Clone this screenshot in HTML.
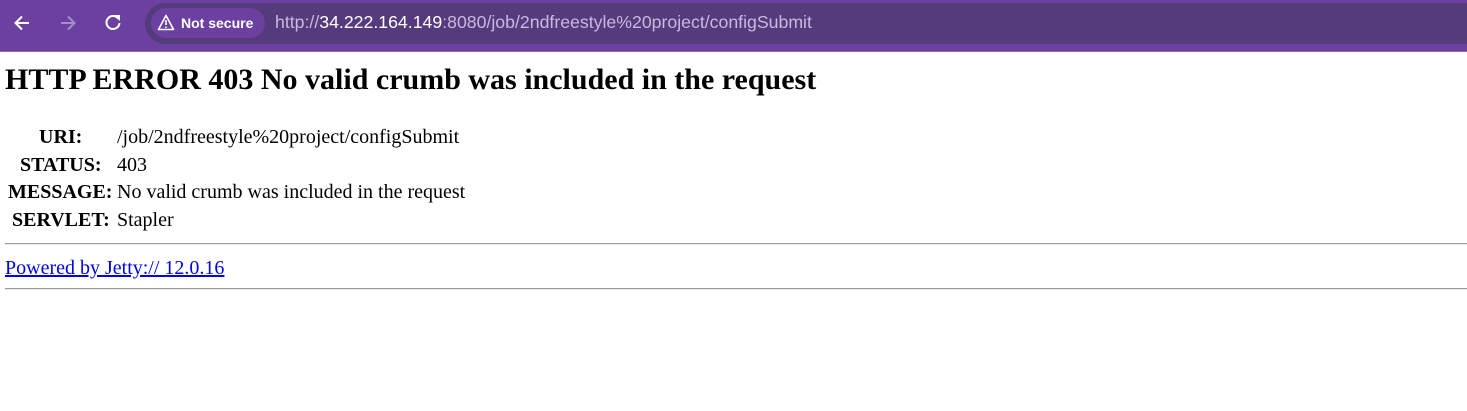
<!DOCTYPE html>
<html><head><style>
html,body{margin:0;padding:0;width:1467px;height:411px;background:#fff;overflow:hidden;position:relative}
.bar{position:absolute;left:0;top:0;width:1467px;height:52px;background:#6c40a1;border-bottom:1px solid #8a67b8;box-sizing:border-box}
.omni{position:absolute;left:145px;top:3px;width:1340px;height:41px;border-radius:21px;background:#553a7c}
.chip{position:absolute;left:151px;top:8px;width:114px;height:30px;border-radius:15px;background:#6c40a1;color:#fff;font:bold 14px "Liberation Sans",sans-serif;line-height:30px}
.url{position:absolute;left:275px;top:12px;font:17.7px "Liberation Sans",sans-serif;color:#c9b8df;white-space:nowrap}
.url b{font-weight:normal;color:#fff}
.t{position:absolute;font-family:"Liberation Serif",serif;color:#000;white-space:nowrap}
h1{position:absolute;left:5px;top:63px;margin:0;font:bold 30px "Liberation Serif",serif}
.th{font-weight:bold;font-size:20px}
.td{font-size:20px}
.hr{position:absolute;left:5px;width:1462px;height:0;border-top:1px solid #9a9a9a;border-bottom:1px solid #eee}
a{color:#0000ee;text-decoration:underline}
</style></head><body>
<div class="bar">
<svg style="position:absolute;left:12px;top:13px" width="20" height="20" viewBox="0 0 20 20"><path d="M17 10H4M10 3.5L3.5 10L10 16.5" stroke="#fff" stroke-width="2" fill="none"/></svg>
<svg style="position:absolute;left:58px;top:13px" width="20" height="20" viewBox="0 0 20 20"><path d="M3 10H16M10 3.5L16.5 10L10 16.5" stroke="#a68cc8" stroke-width="2" fill="none"/></svg>
<svg style="position:absolute;left:103px;top:12px" width="20" height="20" viewBox="0 0 20 20"><path d="M15.5 7A6.5 6.5 0 1 0 16.5 11" stroke="#fff" stroke-width="2" fill="none"/><path d="M11 3H17V9Z" fill="#fff"/></svg>
<div class="omni"></div>
<div class="chip"><svg style="position:absolute;left:6px;top:6px" width="18" height="17" viewBox="0 0 18 17"><path d="M9 1.5L16.5 15.5H1.5Z" stroke="#fff" stroke-width="1.6" fill="none" stroke-linejoin="round"/><path d="M9 6V11M9 12.5V14" stroke="#fff" stroke-width="1.6"/></svg><span style="position:absolute;left:30px">Not secure</span></div>
<div class="url">http://<b>34.222.164.149</b>:8080/job/2ndfreestyle%20project/configSubmit</div>
</div>
<h1>HTTP ERROR 403 No valid crumb was included in the request</h1>
<div class="t th" style="left:39px;top:126px">URI:</div>
<div class="t td" style="left:117px;top:126px">/job/2ndfreestyle%20project/configSubmit</div>
<div class="t th" style="left:20px;top:154px">STATUS:</div>
<div class="t td" style="left:117px;top:154px">403</div>
<div class="t th" style="left:8px;top:181px">MESSAGE:</div>
<div class="t td" style="left:117px;top:181px">No valid crumb was included in the request</div>
<div class="t th" style="left:12px;top:209px">SERVLET:</div>
<div class="t td" style="left:117px;top:209px">Stapler</div>
<div class="hr" style="top:243px"></div>
<div class="t td" style="left:5px;top:257px"><a>Powered by Jetty:// 12.0.16</a></div>
<div class="hr" style="top:288px"></div>
</body></html>
